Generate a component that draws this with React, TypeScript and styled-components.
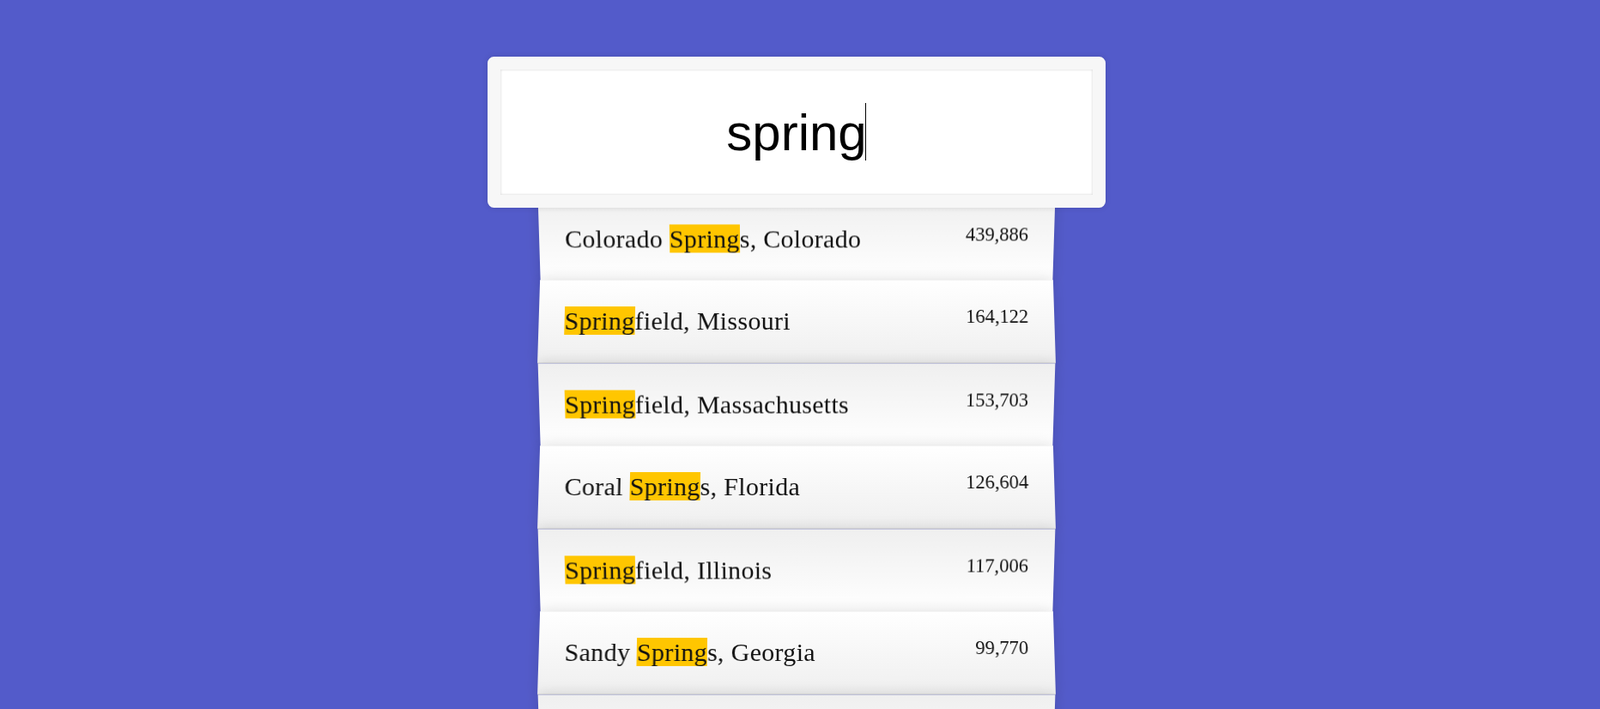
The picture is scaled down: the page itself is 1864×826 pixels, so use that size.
import React from "react";
import styled, { createGlobalStyle, css } from "styled-components";

const GlobalStyle = createGlobalStyle`
	html {
		box-sizing: border-box;
		background: #535bca;
		font-family: "Liberation Serif", "Times New Roman", serif;
		font-size: 30px;
		font-weight: 200;
	}
	*, *::before, *::after {
		box-sizing: inherit;
	}
	body {
		margin: 0;
	}
`;

const SearchForm = styled.form`
	width: 600px;
	margin: 50px 0 0 calc(50% - 304px);
`;

const InputWrap = styled.div`
	position: relative;
	top: 16px;
	z-index: 2;
	width: 720px;
	margin-left: -60px;
`;

const SearchInput = styled.input`
	display: block;
	width: 100%;
	height: 176px;
	margin: 0;
	padding: 0 30px;
	border: 15px solid #f7f7f7;
	border-radius: 7.5px;
	outline: 0;
	background: #fff;
	color: #000;
	text-align: center;
	font-family: "Liberation Sans", Arial, sans-serif;
	font-size: 60px;
	box-shadow: 0 0 7.5px rgba(0, 0, 0, 0.12), inset 0 0 3px rgba(0, 0, 0, 0.19);
	caret-color: transparent;
`;

const Caret = styled.span`
	position: absolute;
	left: 440px;
	top: 54px;
	width: 1px;
	height: 67px;
	background: #000;
	pointer-events: none;
`;

const Suggestions = styled.ul`
	margin: 0;
	padding: 0;
	position: relative;
`;

const Suggestion = styled.li<{ $even: boolean }>`
	list-style: none;
	display: flex;
	justify-content: space-between;
	margin: 0;
	padding: 30px;
	line-height: 35.5px;
	color: #111;
	border-bottom: 1.5px solid #d8d8d8;
	box-shadow: 0 0 15px rgba(0, 0, 0, 0.14);
	text-transform: capitalize;
	${({ $even }) =>
		$even
			? css`
					transform: perspective(500px) rotateX(3deg) translateY(3px) scale(1.001);
					background: linear-gradient(to bottom, #ffffff 0%, #efefef 100%);
			  `
			: css`
					transform: perspective(500px) rotateX(-3deg) translateY(4.5px);
					background: linear-gradient(to top, #ffffff 0%, #efefef 100%);
			  `}
`;

const Name = styled.span`
	letter-spacing: 0.3px;
`;

const Highlight = styled.span`
	background: #ffc600;
`;

const Population = styled.span`
	font-size: 22.5px;
	line-height: 26px;
`;

type Place = { before: string; after: string; pop: string };

const places: Place[] = [
	{ before: "Colorado ", after: "s, Colorado", pop: "439,886" },
	{ before: "", after: "field, Missouri", pop: "164,122" },
	{ before: "", after: "field, Massachusetts", pop: "153,703" },
	{ before: "Coral ", after: "s, Florida", pop: "126,604" },
	{ before: "", after: "field, Illinois", pop: "117,006" },
	{ before: "Sandy ", after: "s, Georgia", pop: "99,770" },
	{ before: "", after: "dale, Arkansas", pop: "75,229" },
	{ before: "", after: "field, Ohio", pop: "60,147" },
];

const App: React.FunctionComponent = () => {
	return (
		<>
			<GlobalStyle />
			<SearchForm onSubmit={(e) => e.preventDefault()}>
				<InputWrap>
					<SearchInput type="text" defaultValue="spring" />
					<Caret />
				</InputWrap>
				<Suggestions>
					{places.map((place, i) => (
						<Suggestion key={i} $even={i % 2 === 1}>
							<Name>
								{place.before}
								<Highlight>Spring</Highlight>
								{place.after}
							</Name>
							<Population>{place.pop}</Population>
						</Suggestion>
					))}
				</Suggestions>
			</SearchForm>
		</>
	);
};

export default App;
